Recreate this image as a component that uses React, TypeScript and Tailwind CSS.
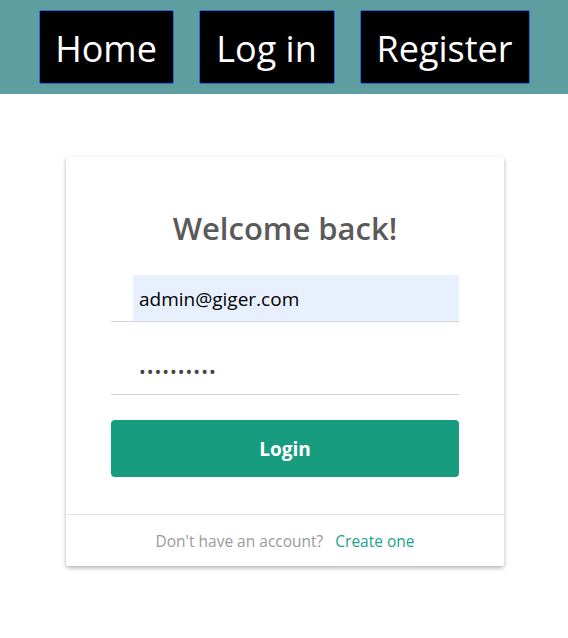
export default function App() {
  return (
    <div className="min-h-screen bg-white font-['Open_Sans','Noto_Sans',sans-serif]">
      {/* Nav */}
      <nav className="flex h-[94px] items-start justify-center gap-[25px] bg-[#5f9ea0] pt-[10px]">
        <a className="flex h-[74px] w-[135px] items-center justify-center rounded-[2px] border border-[#1a6fe0] bg-black pt-[4px] text-[36px] text-white">
          Home
        </a>
        <a className="flex h-[74px] w-[136px] items-center justify-center rounded-[2px] border border-[#1a6fe0] bg-black pt-[4px] text-[36px] text-white">
          Log in
        </a>
        <a className="flex h-[74px] w-[170px] items-center justify-center rounded-[2px] border border-[#1a6fe0] bg-black pt-[4px] text-[36px] text-white">
          Register
        </a>
      </nav>

      {/* Card */}
      <div className="mx-auto mt-[63px] w-[438px] translate-x-[1px] rounded-[2px] bg-white shadow-[0_2px_4px_rgba(0,0,0,0.3)]">
        <div className="px-[45px] pb-[37px] pt-[51px]">
          <h1 className="text-center text-[31px] font-semibold leading-[40px] text-[#5a5a5a]">
            Welcome back!
          </h1>
          <div className="mt-[27px] border-b border-[#cfd4da] pl-[22px]">
            <input
              defaultValue="admin@giger.com"
              className="h-[46px] w-full bg-[#e8f0fe] px-[6px] pt-[2px] text-[19px] text-black outline-none"
            />
          </div>
          <div className="mt-[26px] border-b border-[#cfd4da] pl-[22px]">
            <input
              type="password"
              defaultValue="••••••••••"
              className="h-[46px] w-full px-[6px] pt-[2px] text-[18px] tracking-[1px] text-[#444] outline-none"
            />
          </div>
          <button className="mt-[25px] h-[57px] w-full rounded-[4px] bg-[#189c80] pt-[2px] text-[19px] font-bold text-white">
            Login
          </button>
        </div>
        <div className="flex h-[52px] items-center justify-center gap-[12px] border-t border-[#e2e5e8] pt-[3px] text-[15.5px]">
          <span className="text-[#9a9a9a]">Don't have an account?</span>
          <a className="text-[#1aa38a]">Create one</a>
        </div>
      </div>
    </div>
  );
}
